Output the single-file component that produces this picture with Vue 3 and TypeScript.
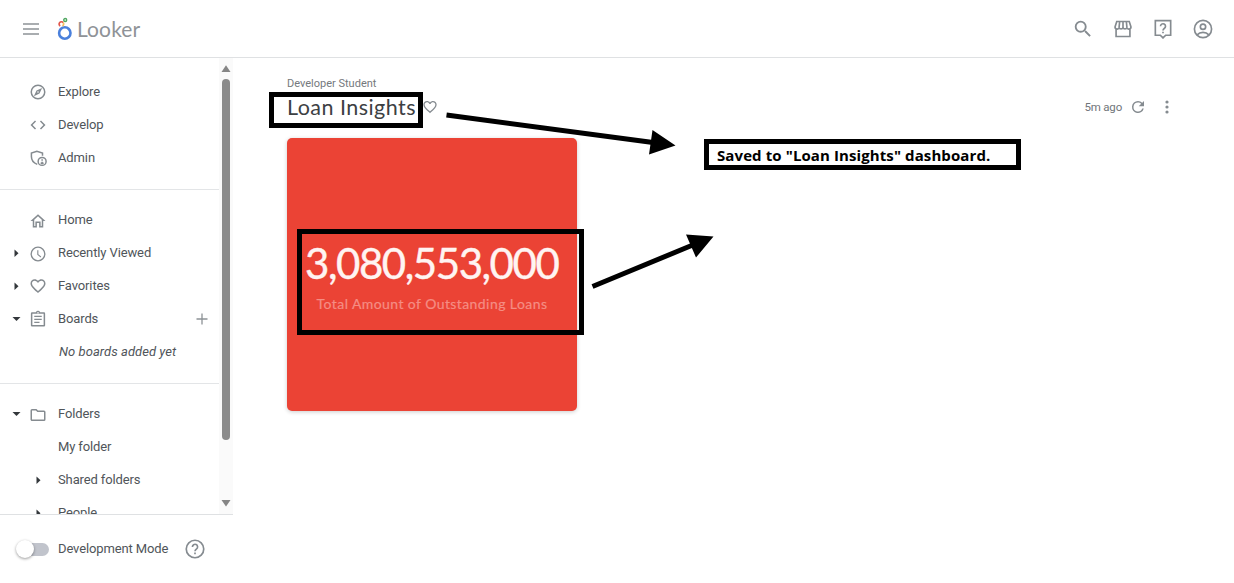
<script setup lang="ts">
interface NavItem {
  label: string
  icon?: string
  caret?: 'right' | 'down'
  nested?: boolean
  note?: boolean
  add?: boolean
}

const icons: Record<string, string> = {
  explore: 'M12 2a10 10 0 1 0 0 20 10 10 0 0 0 0-20zm0 18a8 8 0 1 1 0-16 8 8 0 0 1 0 16zM6.5 17.5l7.51-3.49L17.5 6.5 9.99 9.99 6.5 17.5zm5.5-6.6a1.1 1.1 0 1 1 0 2.2 1.1 1.1 0 0 1 0-2.2z',
  develop: 'M9.4 16.6L4.8 12l4.6-4.6L8 6l-6 6 6 6 1.4-1.4zm5.2 0l4.6-4.6-4.6-4.6L16 6l6 6-6 6-1.4-1.4z',
  home: 'M12 3L2 12h3v8.500h5.500v-6h3v6H19V12h3L12 3zm0 2.700l5 4.500v8.300h-1.500v-6h-7v6H7v-8.300l5-4.500z',
  clock: 'M12 2a10 10 0 1 0 0 20 10 10 0 0 0 0-20zm0 18.200a8.200 8.200 0 1 1 0-16.400 8.200 8.200 0 0 1 0 16.400zM12.500 7H11v6l4.500 3.500.8-1.200-3.800-3V7z',
  heart: 'M16.500 3c-1.740 0-3.410.81-4.500 2.090C10.910 3.810 9.240 3 7.500 3 4.420 3 2 5.420 2 8.500c0 3.780 3.400 6.860 8.550 11.540L12 21.350l1.450-1.320C18.600 15.360 22 12.280 22 8.500 22 5.420 19.580 3 16.500 3zm-4.400 15.550l-.1.1-.1-.1C7.140 14.240 4 11.390 4 8.500 4 6.500 5.500 5 7.500 5c1.540 0 3.040.99 3.570 2.360h1.870C13.460 5.990 14.960 5 16.500 5c2 0 3.500 1.500 3.500 3.500 0 2.890-3.140 5.740-7.900 10.050z',
  board: 'M20 3h-5.200a3 3 0 0 0-5.600 0H4a1.500 1.500 0 0 0-1.500 1.500v16A1.500 1.500 0 0 0 4 22h16a1.500 1.500 0 0 0 1.500-1.500v-16A1.500 1.500 0 0 0 20 3zm-8-.5a1 1 0 1 1 0 2 1 1 0 0 1 0-2zM19.500 20H4.500V5h15v15zM7 7.500h10v1.900H7zm0 4h10v1.900H7zm0 4h7v1.900H7z',
  folder: 'M9.170 6l2 2H20v10H4V6h5.170M10 4H4a2 2 0 0 0-2 2v12c0 1.100.9 2 2 2h16a2 2 0 0 0 2-2V8a2 2 0 0 0-2-2h-8l-2-2z',
}

const sections: NavItem[][] = [
  [
    { label: 'Explore', icon: 'explore' },
    { label: 'Develop', icon: 'develop' },
    { label: 'Admin', icon: 'admin' },
  ],
  [
    { label: 'Home', icon: 'home' },
    { label: 'Recently Viewed', icon: 'clock', caret: 'right' },
    { label: 'Favorites', icon: 'heart', caret: 'right' },
    { label: 'Boards', icon: 'board', caret: 'down', add: true },
    { label: 'No boards added yet', note: true },
  ],
  [
    { label: 'Folders', icon: 'folder', caret: 'down' },
    { label: 'My folder' },
    { label: 'Shared folders', caret: 'right', nested: true },
    { label: 'People', caret: 'right', nested: true },
  ],
]
</script>

<template>
  <div class="app">
    <header class="topbar">
      <svg class="menu" viewBox="0 0 16 12"><path d="M0 1h16M0 6h16M0 11h16" stroke="#8d9296" stroke-width="1.700" /></svg>
      <div class="brand">
        <svg class="logo" viewBox="0 0 16 24" fill="none">
          <circle cx="7.800" cy="16" r="5.700" stroke="#4a80dc" stroke-width="2.600" />
          <path d="M3.200 9A2.300 2.300 0 1 1 6.200 5.600" stroke="#e2574c" stroke-width="1.700" />
          <path d="M6.200 5.600A2.300 2.300 0 0 1 5.400 9" stroke="#f4c063" stroke-width="1.700" />
          <circle cx="8.200" cy="3" r="1.500" stroke="#51a862" stroke-width="1.400" />
        </svg>
        <span class="brand-name">Looker</span>
      </div>
      <div class="tools">
        <svg viewBox="0 0 24 24"><path d="M15.500 14h-.79l-.28-.27A6.470 6.470 0 0 0 16 9.500 6.500 6.500 0 1 0 9.500 16c1.610 0 3.090-.59 4.230-1.570l.27.28v.79l5 4.990L20.490 19l-4.990-5zm-6 0a4.500 4.500 0 1 1 0-9 4.500 4.500 0 0 1 0 9z" /></svg>
        <svg viewBox="0 0 24 24" class="line"><path d="M4.500 3h15l2 6.200a2.300 2.300 0 0 1-4.800.8 2.400 2.400 0 0 1-4.700 0 2.400 2.400 0 0 1-4.700 0 2.300 2.300 0 0 1-4.800-.8zM3.700 12v9h16.600v-9M8 3l-.7 7M12 3v7M16 3l.7 7" /></svg>
        <svg viewBox="0 0 24 24" class="line"><path d="M2.800 2h18.400v17.500h-6L12 22.700l-3.200-3.200h-6zM9 8.700a3 3 0 1 1 4.800 2.400c-1.200.9-1.800 1.400-1.800 2.700M12 15.200v2" /></svg>
        <svg viewBox="0 0 24 24" class="line"><circle cx="12" cy="12" r="10.300" /><circle cx="12" cy="9.300" r="3.200" /><path d="M5 19c3.500-4 10.500-4 14 0" /></svg>
      </div>
    </header>

    <div class="body">
      <aside class="sidebar">
        <div class="scroller">
          <nav class="nav">
            <ul v-for="(items, i) in sections" :key="i" class="section">
              <li v-for="item in items" :key="item.label" class="item">
                <span class="caret-cell" :class="{ nested: item.nested }">
                  <svg v-if="item.caret" class="caret" viewBox="0 0 8 8">
                    <path :d="item.caret === 'right' ? 'M2.500 .5L6.500 4.200 2.500 8z' : 'M.5 2h8L4.500 6z'" />
                  </svg>
                </span>
                <span class="icon-cell" :class="{ narrow: item.nested }">
                  <svg v-if="item.icon === 'admin'" class="icon line" viewBox="0 0 24 24">
                    <path d="M11 20.500C6 18.500 3.200 15 3.200 10V5.500L10.500 3l7.500 2.500V9" />
                    <circle cx="17.500" cy="16.500" r="5.300" />
                    <path d="M17.500 13.500v2.200M17.500 17v2.500M15.500 19h4" />
                  </svg>
                  <svg v-else-if="item.icon" class="icon" viewBox="0 0 24 24">
                    <path fill-rule="evenodd" :d="icons[item.icon]" />
                  </svg>
                </span>
                <span class="label" :class="{ note: item.note }">{{ item.label }}</span>
                <svg v-if="item.add" class="add" viewBox="0 0 12 12"><path d="M6 .5v11M.5 6h11" stroke="#8d9296" stroke-width="1.300" /></svg>
              </li>
            </ul>
          </nav>
          <div class="scrollbar">
            <svg class="arrow" viewBox="0 0 10 8"><path d="M5 .3L9.500 7H.5z" /></svg>
            <div class="thumb"></div>
            <svg class="arrow end" viewBox="0 0 10 8"><path d="M5 7.500L9.500 1H.5z" /></svg>
          </div>
        </div>
        <div class="dev-mode">
          <span class="switch"><span class="knob"></span></span>
          <span class="label dev-label">Development Mode</span>
          <svg class="help line" viewBox="0 0 24 24"><circle cx="12" cy="12" r="10.500" /><path d="M8.900 9.500a3.100 3.100 0 1 1 5 2.400c-1.300 1-1.900 1.500-1.900 2.800M12 16.200v2" /></svg>
        </div>
      </aside>

      <main class="main">
        <div class="heading">
          <div>
            <div class="crumb">Developer Student</div>
            <div class="title-row">
              <h1 class="title">Loan Insights</h1>
              <svg class="fav" viewBox="0 0 24 24"><path :d="icons.heart" /></svg>
            </div>
          </div>
          <div class="status">
            <span>5m ago</span>
            <svg class="refresh" viewBox="0 0 24 24"><path d="M17.650 6.350A7.960 7.960 0 0 0 12 4a8 8 0 1 0 7.730 10h-2.080A6 6 0 1 1 12 6c1.660 0 3.140.69 4.220 1.780L13 11h7V4l-2.350 2.350z" /></svg>
            <svg class="more" viewBox="0 0 4 14"><circle cx="2" cy="2" r="1.600" /><circle cx="2" cy="7" r="1.600" /><circle cx="2" cy="12" r="1.600" /></svg>
          </div>
        </div>
        <section class="tile">
          <div class="value">3,080,553,000</div>
          <div class="caption">Total Amount of Outstanding Loans</div>
        </section>
      </main>
    </div>

    <div class="frame frame-title"></div>
    <div class="frame frame-value"></div>
    <div class="frame callout">Saved to "Loan Insights" dashboard.</div>
    <svg class="arrows" viewBox="0 0 1234 583">
      <path d="M446.500 115L653 142.500M592.500 286.500L694 244.500" stroke="#000" stroke-width="5" />
      <path d="M652.500 130L675.500 145.500 649 154.500zM686 234.500L713.500 236.500 696 257.500z" />
    </svg>
  </div>
</template>

<style>
body {
  margin: 0;
  background: #fff;
}
</style>

<style scoped>
.app {
  position: relative;
  display: flex;
  flex-direction: column;
  width: 1234px;
  height: 583px;
  overflow: hidden;
  background: #fff;
  color: #50555a;
  font-family: Roboto, "Liberation Sans", sans-serif;
  font-size: 13px;
}
svg {
  display: block;
  flex: none;
  fill: #858b90;
}
.line {
  fill: none;
  stroke: #858b90;
  stroke-width: 2;
}
.topbar {
  display: flex;
  align-items: center;
  box-sizing: border-box;
  height: 58px;
  padding: 0 20px 0 23px;
  border-bottom: 1px solid #dfe1e3;
}
.menu {
  width: 16px;
  height: 12px;
}
.brand {
  display: flex;
  align-items: center;
  margin-left: 18px;
}
.logo {
  width: 16px;
  height: 24px;
  fill: none;
}
.brand-name {
  margin-left: 4px;
  color: #8f9397;
  font: 400 21px/24px Lato, sans-serif;
  letter-spacing: 0.1px;
}
.tools {
  display: flex;
  gap: 18px;
  margin-left: auto;
}
.tools svg {
  width: 22px;
  height: 22px;
}
.tools .line {
  width: 20px;
  height: 20px;
  margin: 1px;
}
.body {
  display: flex;
  flex: 1;
  min-height: 0;
}
.sidebar {
  display: flex;
  flex-direction: column;
  width: 233px;
}
.scroller {
  display: flex;
  height: 456px;
  overflow: hidden;
  border-bottom: 1px solid #dfe1e3;
}
.nav {
  width: 219px;
}
.section {
  margin: 0;
  padding: 14px 0 15px;
  list-style: none;
  border-bottom: 1px solid #e3e5e7;
}
.section:first-child {
  padding-top: 17.600px;
}
.section:last-child {
  border: 0;
}
.item {
  display: flex;
  align-items: center;
  height: 32.800px;
}
.caret-cell {
  display: flex;
  justify-content: flex-end;
  width: 20px;
}
.caret-cell.nested {
  width: 42px;
}
.caret {
  width: 8px;
  height: 8px;
  overflow: visible;
  fill: #33373b;
}
.icon-cell {
  width: 29px;
  margin-left: 9px;
}
.icon-cell.narrow {
  width: 7px;
}
.icon {
  width: 18px;
  height: 18px;
  margin-top: 1px;
}
.label {
  letter-spacing: -0.12px;
  line-height: 18px;
  white-space: nowrap;
}
.note {
  padding-left: 1px;
  font-style: italic;
  letter-spacing: 0.05px;
}
.dev-label {
  width: 111px;
}
.add {
  width: 12px;
  height: 12px;
  margin: 1px 11px 0 auto;
}
.scrollbar {
  display: flex;
  flex-direction: column;
  align-items: center;
  box-sizing: border-box;
  width: 14px;
  padding: 7px 0 7px;
  background: #fafafa;
}
.scrollbar svg {
  width: 10px;
  height: 8px;
  fill: #858585;
}
.thumb {
  width: 8px;
  height: 361px;
  margin-top: 6px;
  border-radius: 4px;
  background: #8b8b8b;
}
.scrollbar .end {
  margin-top: auto;
}
.dev-mode {
  display: flex;
  flex: 1;
  align-items: center;
}
.switch {
  display: flex;
  align-items: center;
  width: 28px;
  height: 13px;
  margin: 0 9px 0 21px;
  border-radius: 7px;
  background: #c1c4cc;
}
.knob {
  flex: none;
  width: 18px;
  height: 18px;
  margin-left: -5px;
  border-radius: 50%;
  background: #fff;
  box-shadow: 0 1px 3px #00000066;
}
.help {
  width: 20px;
  height: 20px;
  margin: 0 0 0 16px;
}
.main {
  flex: 1;
  padding: 17px 60px 0 54px;
}
.heading {
  display: flex;
  justify-content: space-between;
}
.crumb {
  height: 17px;
  color: #75797d;
  font-size: 11px;
  line-height: 17px;
}
.title-row {
  display: flex;
  align-items: center;
  height: 30px;
}
.title {
  width: 129px;
  margin: 0 6px 0 0;
  color: #3c4043;
  font: 400 21.500px/30px Lato, sans-serif;
  letter-spacing: 0.46px;
  white-space: nowrap;
}
.fav {
  width: 16px;
  height: 16px;
  margin-top: -1px;
}
.status {
  display: flex;
  align-items: center;
  height: 30px;
  margin-top: 17px;
  color: #70757a;
  font-size: 11.500px;
  letter-spacing: -0.2px;
}
.refresh {
  width: 18px;
  height: 18px;
  margin-left: 7px;
}
.more {
  width: 4px;
  height: 14px;
  margin: 0 5px 0 18px;
}
.tile {
  display: flex;
  flex-direction: column;
  align-items: center;
  box-sizing: border-box;
  width: 290px;
  height: 273px;
  margin-top: 16px;
  padding: 100px 0 0;
  border-radius: 5px;
  background: #eb4335;
  box-shadow: 0 1px 4px #00000033;
}
.value {
  width: 254px;
  color: #fff4f2;
  font: 400 42px/50px Lato, sans-serif;
  letter-spacing: -1.450px;
  white-space: nowrap;
  -webkit-text-stroke: 0.4px #fff4f2;
}
.caption {
  margin-top: 7px;
  color: #f58d84;
  font: 400 14px/18px Lato, sans-serif;
  letter-spacing: 0.42px;
  white-space: nowrap;
  -webkit-text-stroke: 0.2px #f58d84;
}
.frame {
  position: absolute;
  box-sizing: border-box;
  border: 5px solid #000;
}
.frame-title {
  left: 269px;
  top: 92px;
  width: 154px;
  height: 36px;
}
.frame-value {
  left: 297px;
  top: 229px;
  width: 287px;
  height: 106px;
}
.callout {
  left: 704px;
  top: 139px;
  width: 317px;
  height: 31px;
  padding-left: 8px;
  background: #fff;
  color: #000;
  font: 700 15px/22px "Open Sans", "Noto Sans", sans-serif;
  letter-spacing: 0.1px;
  white-space: nowrap;
}
.arrows {
  position: absolute;
  left: 0;
  top: 0;
  width: 1234px;
  height: 583px;
  fill: #000;
}
</style>
